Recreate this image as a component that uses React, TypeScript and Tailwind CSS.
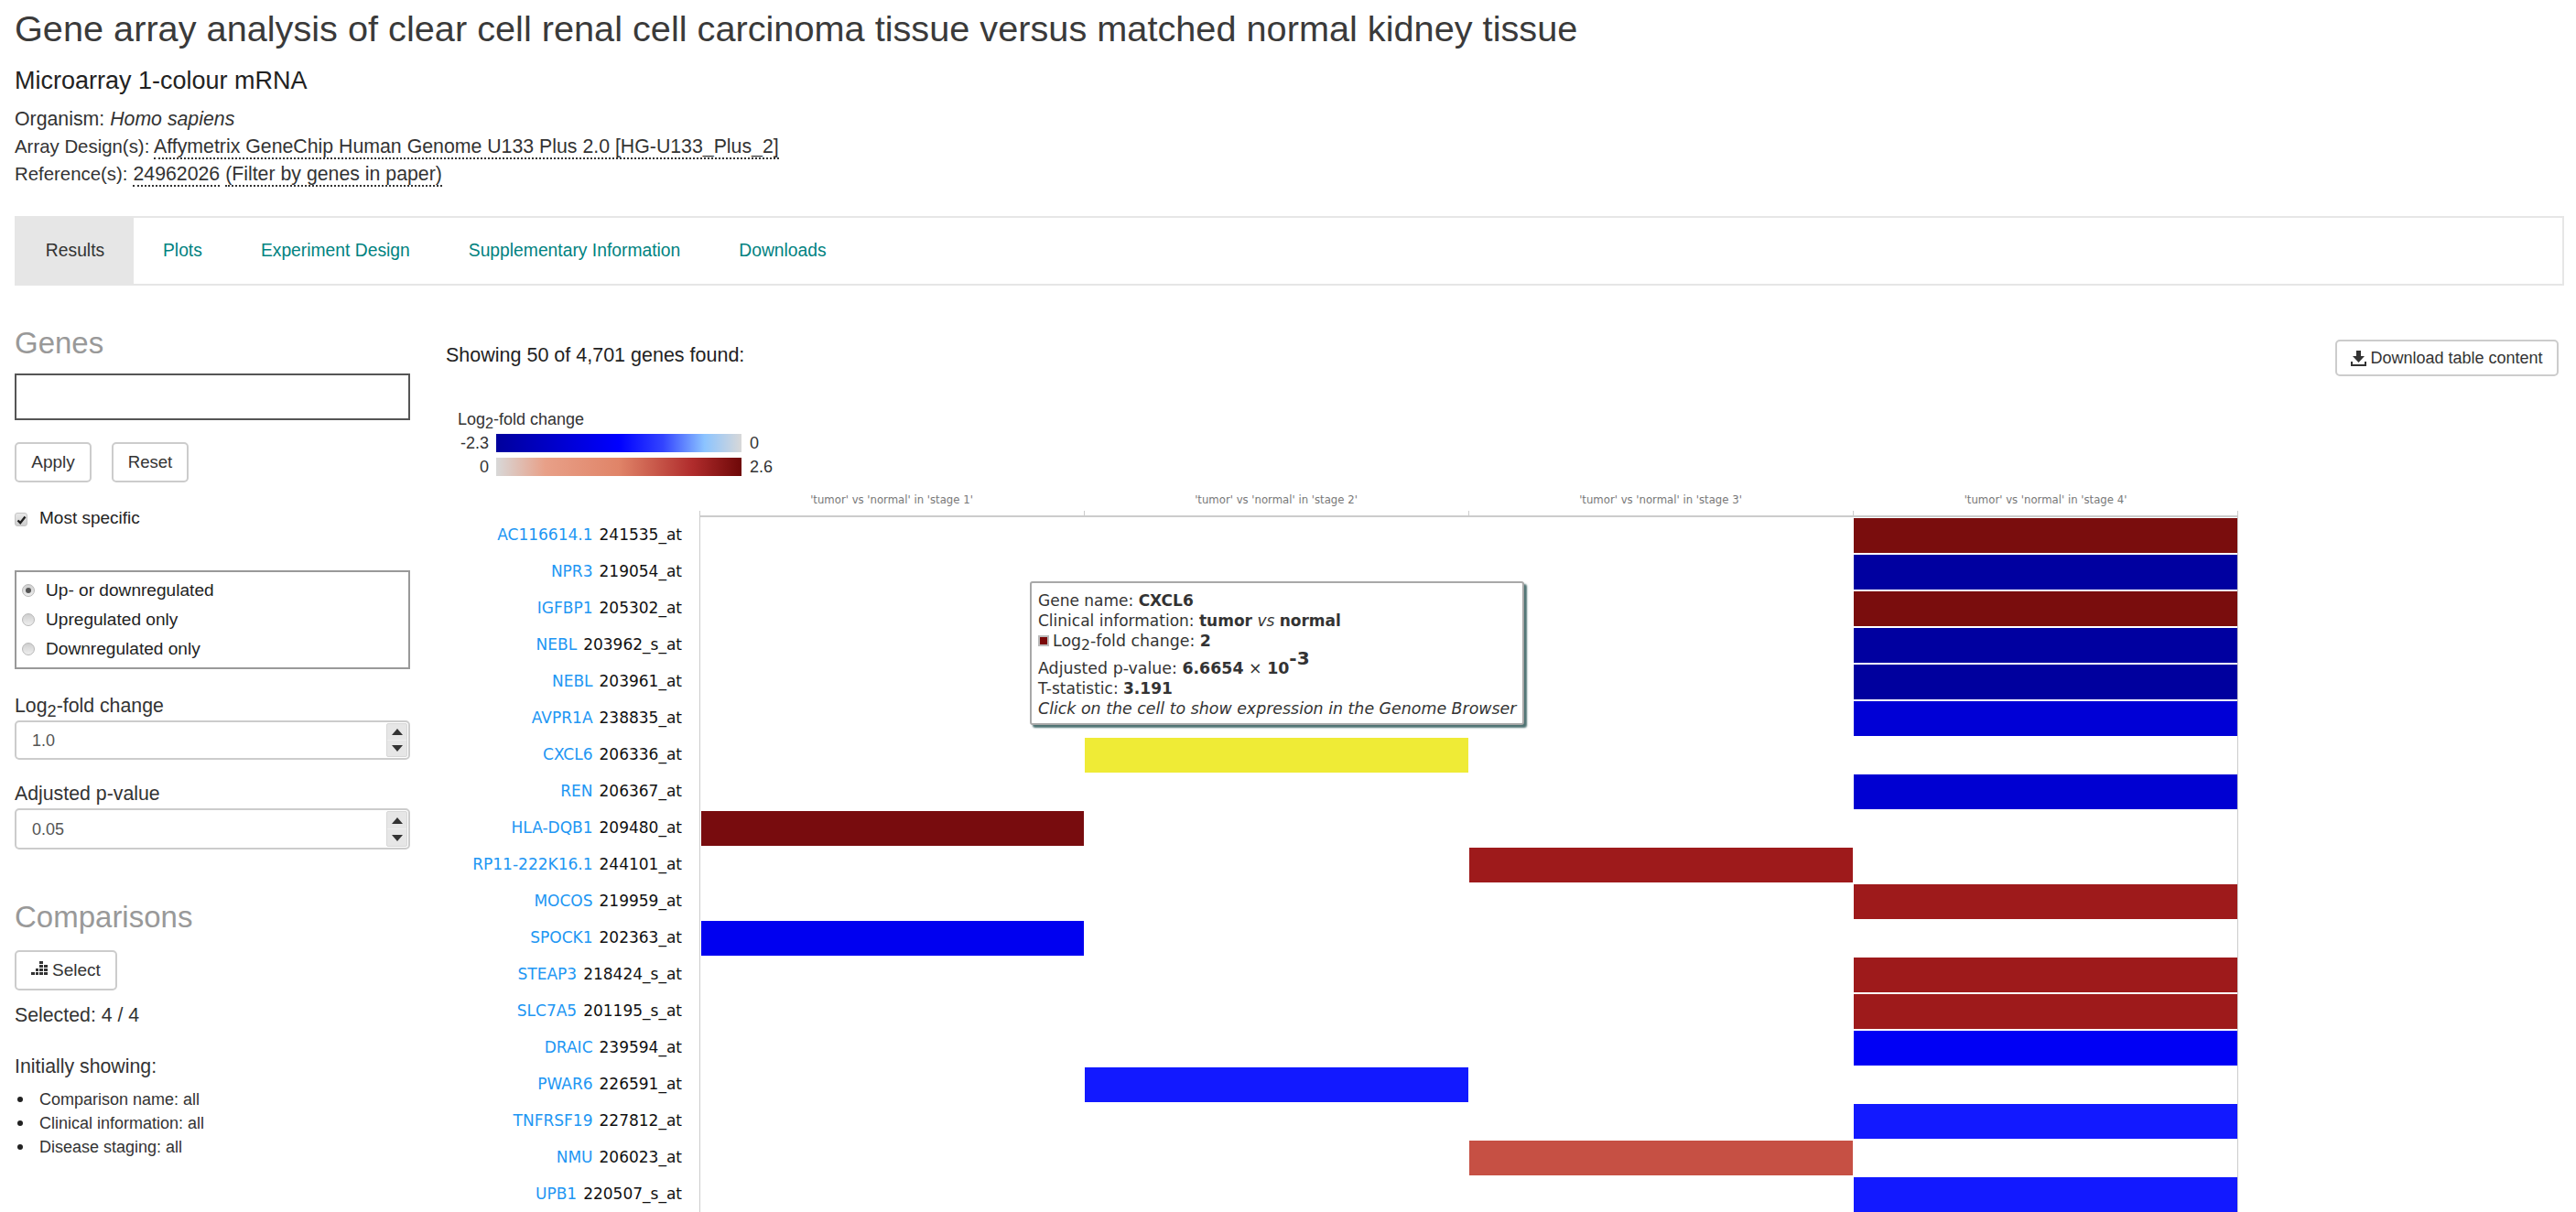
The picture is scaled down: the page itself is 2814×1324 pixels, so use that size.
import React from "react";

const rows = [
  { gene: "AC116614.1", probe: "241535_at", col: "col-start-4", bar: "bg-[#7a0d0d]" },
  { gene: "NPR3", probe: "219054_at", col: "col-start-4", bar: "bg-[#0000a0]" },
  { gene: "IGFBP1", probe: "205302_at", col: "col-start-4", bar: "bg-[#7a0d0d]" },
  { gene: "NEBL", probe: "203962_s_at", col: "col-start-4", bar: "bg-[#0000a0]" },
  { gene: "NEBL", probe: "203961_at", col: "col-start-4", bar: "bg-[#00009e]" },
  { gene: "AVPR1A", probe: "238835_at", col: "col-start-4", bar: "bg-[#0000d6]" },
  { gene: "CXCL6", probe: "206336_at", col: "col-start-2", bar: "bg-[#efeb36]" },
  { gene: "REN", probe: "206367_at", col: "col-start-4", bar: "bg-[#0000d2]" },
  { gene: "HLA-DQB1", probe: "209480_at", col: "col-start-1", bar: "bg-[#780c0e]" },
  { gene: "RP11-222K16.1", probe: "244101_at", col: "col-start-3", bar: "bg-[#9e1a1b]" },
  { gene: "MOCOS", probe: "219959_at", col: "col-start-4", bar: "bg-[#9e1a1b]" },
  { gene: "SPOCK1", probe: "202363_at", col: "col-start-1", bar: "bg-[#0000f0]" },
  { gene: "STEAP3", probe: "218424_s_at", col: "col-start-4", bar: "bg-[#9e1a1b]" },
  { gene: "SLC7A5", probe: "201195_s_at", col: "col-start-4", bar: "bg-[#9e1a1b]" },
  { gene: "DRAIC", probe: "239594_at", col: "col-start-4", bar: "bg-[#0000f5]" },
  { gene: "PWAR6", probe: "226591_at", col: "col-start-2", bar: "bg-[#1219ff]" },
  { gene: "TNFRSF19", probe: "227812_at", col: "col-start-4", bar: "bg-[#1219ff]" },
  { gene: "NMU", probe: "206023_at", col: "col-start-3", bar: "bg-[#c65044]" },
  { gene: "UPB1", probe: "220507_s_at", col: "col-start-4", bar: "bg-[#1219ff]" },
];

const stages = ["1", "2", "3", "4"];

function Radio({ checked, label }: { checked?: boolean; label: string }) {
  return (
    <div className="flex h-8 items-center gap-[12px] pl-[6px] text-[19.1px] text-[#222]">
      <span className="flex h-[14px] w-[14px] items-center justify-center rounded-full border border-[#b8b8b8] bg-gradient-to-b from-[#cfcfcf] to-[#eeeeee]">
        {checked && <span className="h-[6px] w-[6px] rounded-full bg-[#555]" />}
      </span>
      <span>{label}</span>
    </div>
  );
}

function Spin({ value, boxClass }: { value: string; boxClass: string }) {
  return (
    <div className={`flex w-[432px] rounded-[5px] border-2 border-[#ccc] bg-white p-px ${boxClass}`}>
      <input readOnly value={value} className="min-w-0 flex-1 bg-transparent pl-[16px] text-[18px] text-[#555] outline-none" />
      <div className="flex w-[23px] flex-col rounded-[2px] border border-[#d8d8d8] bg-[#e6e6e6]">
        <div className="flex flex-1 items-center justify-center border-b border-[#efefef]">
          <svg width="12" height="7" viewBox="0 0 12 7"><path d="M6 0 12 7H0z" fill="#333" /></svg>
        </div>
        <div className="flex flex-1 items-center justify-center">
          <svg width="12" height="7" viewBox="0 0 12 7"><path d="M0 0H12L6 7z" fill="#333" /></svg>
        </div>
      </div>
    </div>
  );
}

function Sidebar() {
  return (
    <div className="w-[432px] shrink-0 font-['Liberation_Sans',Arial,sans-serif] text-[21.3px] leading-6 text-[#333]">
      <h3 className="mt-[43px] text-[33px] leading-10 text-[#999]">Genes</h3>
      <input className="mt-[13px] block h-[51px] w-[432px] border-2 border-[#555] bg-white outline-none" />
      <div className="mt-[24px] flex gap-[22px]">
        <button className="h-11 w-[84px] rounded-[5px] border-2 border-[#ccc] bg-white text-[19px] text-[#333]">Apply</button>
        <button className="h-11 w-[84px] rounded-[5px] border-2 border-[#ccc] bg-white text-[18.6px] text-[#333]">Reset</button>
      </div>
      <div className="mt-[27px] flex h-6 items-center gap-[13px] text-[19px] text-[#222]">
        <span className="mt-[3px] flex h-[15px] w-[14px] items-center justify-center rounded-[3px] border border-[#c4c4c4] bg-gradient-to-b from-[#e8e8e8] to-[#cfcfcf]">
          <svg width="11" height="10" viewBox="0 0 11 10"><path d="M1.5 5.5 4.2 8.2 9.5 1.5" fill="none" stroke="#222" strokeWidth="2.4" /></svg>
        </span>
        <span>Most specific</span>
      </div>
      <div className="mt-[45px] h-[108px] border-2 border-[#999] py-1">
        <Radio checked label="Up- or downregulated" />
        <Radio label="Upregulated only" />
        <Radio label="Downregulated only" />
      </div>
      <div className="mt-[28px] h-[24px]">Log<sub className="text-[85%]">2</sub>-fold change</div>
      <Spin value="1.0" boxClass="mt-[4px] h-[43px]" />
      <div className="mt-[25px] h-[25px]">Adjusted p-value</div>
      <Spin value="0.05" boxClass="mt-[3px] h-[45px]" />
      <h3 className="mt-[54px] text-[33px] leading-10 text-[#999]">Comparisons</h3>
      <button className="mt-[16px] flex h-11 w-[112px] items-center gap-[5px] rounded-[5px] border-2 border-[#ccc] bg-white pl-[16px] text-[19px] text-[#333]">
        <svg width="18" height="16" viewBox="0 0 18 16" className="mb-[4px] fill-[#333]">
          <rect x="0" y="12" width="4" height="3" />
          <rect x="5" y="12" width="3" height="3" />
          <rect x="5" y="8" width="3" height="3" />
          <rect x="9" y="12" width="4" height="3" />
          <rect x="9" y="8" width="4" height="3" />
          <rect x="9" y="4" width="4" height="3" />
          <rect x="9" y="0" width="4" height="3" />
          <rect x="14" y="12" width="4" height="3" />
          <rect x="14" y="8" width="4" height="3" />
          <rect x="14" y="4" width="4" height="3" />
        </svg>
        Select
      </button>
      <div className="mt-[15px] h-[25px]">Selected: 4 / 4</div>
      <div className="mt-[31px] h-[25px]">Initially showing:</div>
      <ul className="mt-[10px] text-[18px] leading-[26px]">
        {["Comparison name: all", "Clinical information: all", "Disease staging: all"].map((t) => (
          <li key={t} className="flex items-center">
            <span className="ml-[3px] h-[6px] w-[6px] rounded-full bg-[#222]" />
            <span className="ml-[18px]">{t}</span>
          </li>
        ))}
      </ul>
    </div>
  );
}

function Tooltip() {
  return (
    <div className="absolute left-[638px] top-[323px] z-10 h-[157px] w-[540px] rounded-[3px] border-2 border-[#a8a8a8] bg-white pl-[7px] pt-[8px] font-['DejaVu_Sans',sans-serif] text-[17px] leading-[22px] text-[#333] shadow-[3px_3px_2px_#4d7272]">
      <div className="h-[22px]">Gene name: <b>CXCL6</b></div>
      <div className="h-[22px]">Clinical information: <b>tumor</b> <i>vs</i> <b>normal</b></div>
      <div className="flex h-[22px] items-center gap-[4px] text-[17.4px]">
        <span className="h-[12px] w-[12px] border-2 border-[#bbb] bg-[#7a0808]" />
        <span>Log<sub className="text-[90%]">2</sub>-fold change: <b>2</b></span>
      </div>
      <div className="mt-[8px] h-[22px] text-[17.4px]">Adjusted p-value: <b>6.6654</b> × <b>10<sup className="text-[20px]">-3</sup></b></div>
      <div className="h-[22px]">T-statistic: <b>3.191</b></div>
      <div className="h-[22px] text-[17.4px] italic">Click on the cell to show expression in the Genome Browser</div>
    </div>
  );
}

function Heatmap() {
  return (
    <div className="mt-[18px]">
      <div className="ml-[277px] grid w-[1681px] grid-cols-[420px_420px_420px_421px] font-['DejaVu_Sans',sans-serif] text-[11.7px] leading-4 text-[#777]">
        {stages.map((s) => (
          <div key={s} className="text-center">'tumor' vs 'normal' in 'stage {s}'</div>
        ))}
      </div>
      <div className="ml-[277px] mt-[4px] grid h-[7px] w-[1681px] grid-cols-[420px_420px_420px_421px] border-b-2 border-[#ccc]">
        <div className="border-l border-[#ccc]" />
        <div className="border-l border-[#ccc]" />
        <div className="border-l border-[#ccc]" />
        <div className="border-x border-[#ccc]" />
      </div>
      {rows.map((r) => (
        <div key={r.gene + r.probe} className="flex h-10 font-['DejaVu_Sans',sans-serif] text-[17px]">
          <div className="flex w-[277px] shrink-0 items-center justify-end gap-[7px] pr-[19px]">
            <span className="text-[#2196f3]">{r.gene}</span>
            <span className="text-[#111]">{r.probe}</span>
          </div>
          <div className="grid w-[1681px] grid-cols-[419px_420px_420px_420px] border-x border-[#ccc] py-px">
            <div className={`${r.col} pl-px`}>
              <div className={`h-[38px] ${r.bar}`} />
            </div>
          </div>
        </div>
      ))}
    </div>
  );
}

export default function App() {
  return (
    <div className="h-[1324px] overflow-hidden bg-white pl-4 pr-[13px] font-['Liberation_Sans',Arial,sans-serif] text-[#333]">
      <h1 className="pt-[7px] text-[39.7px] leading-[48px] text-[#3a3a3a]">
        Gene array analysis of clear cell renal cell carcinoma tissue versus matched normal kidney tissue
      </h1>
      <h2 className="mt-[17px] text-[27px] leading-8 text-[#222]">Microarray 1-colour mRNA</h2>
      <div className="mt-[11px] text-[21.3px] leading-[30px] text-[#333]">
        <div>Organism: <i>Homo sapiens</i></div>
        <div>
          <span className="text-[20.4px]">Array Design(s):</span>{" "}
          <span className="border-b-2 border-dotted border-[#333] leading-none">Affymetrix GeneChip Human Genome U133 Plus 2.0 [HG-U133_Plus_2]</span>
        </div>
        <div>
          <span className="text-[20.4px]">Reference(s):</span>{" "}
          <span className="border-b-2 border-dotted border-[#333] leading-none">24962026</span>{" "}
          <span className="border-b-2 border-dotted border-[#333] leading-none">(Filter by genes in paper)</span>
        </div>
      </div>
      <nav className="mt-[31px] flex h-[76px] items-stretch border-2 border-l-0 border-[#e6e6e6] text-[19.3px]">
        <div className="-my-[2px] flex w-[130px] items-center justify-center bg-[#e6e6e6] pl-[2px] text-[#333]">Results</div>
        {["Plots", "Experiment Design", "Supplementary Information", "Downloads"].map((t) => (
          <div key={t} className="flex items-center px-8 text-[#00827f]">{t}</div>
        ))}
      </nav>
      <main className="relative -ml-4 flex pl-4 pr-[6px]">
        <Sidebar />
        <div className="ml-[39px] min-w-0 flex-1">
          <div className="mt-[59px] flex items-start justify-between">
            <div className="mt-[3px] text-[21.5px] leading-7 text-[#222]">Showing 50 of 4,701 genes found:</div>
            <button className="flex h-10 w-[244px] items-center justify-center gap-[4px] rounded-[5px] border-2 border-[#ccc] bg-white pt-[1px] text-[18px] text-[#333]">
              <svg width="17" height="17" viewBox="0 0 17 17" className="fill-[#333]">
                <path d="M6 0h5v6h4l-6.5 7L2 6h4z" />
                <path d="M0 12h2v3h13v-3h2v5H0z" />
              </svg>
              Download table content
            </button>
          </div>
          <div className="ml-[13px] mt-[36px] text-[18px] leading-[22px] text-[#333]">
            <div>Log<sub className="text-[90%]">2</sub>-fold change</div>
            <div className="mt-[5px] flex h-5 items-center">
              <span className="w-[34px] text-right">-2.3</span>
              <span className="ml-[8px] h-5 w-[268px] bg-[linear-gradient(to_right,#00009c_0%,#0000ff_50%,#3344ff_68%,#8cc4ff_85%,#d8d8d8_100%)]" />
              <span className="ml-[9px]">0</span>
            </div>
            <div className="mt-[6px] flex h-5 items-center">
              <span className="w-[34px] text-right">0</span>
              <span className="ml-[8px] h-5 w-[268px] bg-[linear-gradient(to_right,#d8d8d8_0%,#e8a088_20%,#e08468_50%,#b02c2c_80%,#6e0808_100%)]" />
              <span className="ml-[9px]">2.6</span>
            </div>
          </div>
          <Heatmap />
        </div>
        <div className="pointer-events-none absolute left-[487px] top-0">
          <Tooltip />
        </div>
      </main>
    </div>
  );
}
